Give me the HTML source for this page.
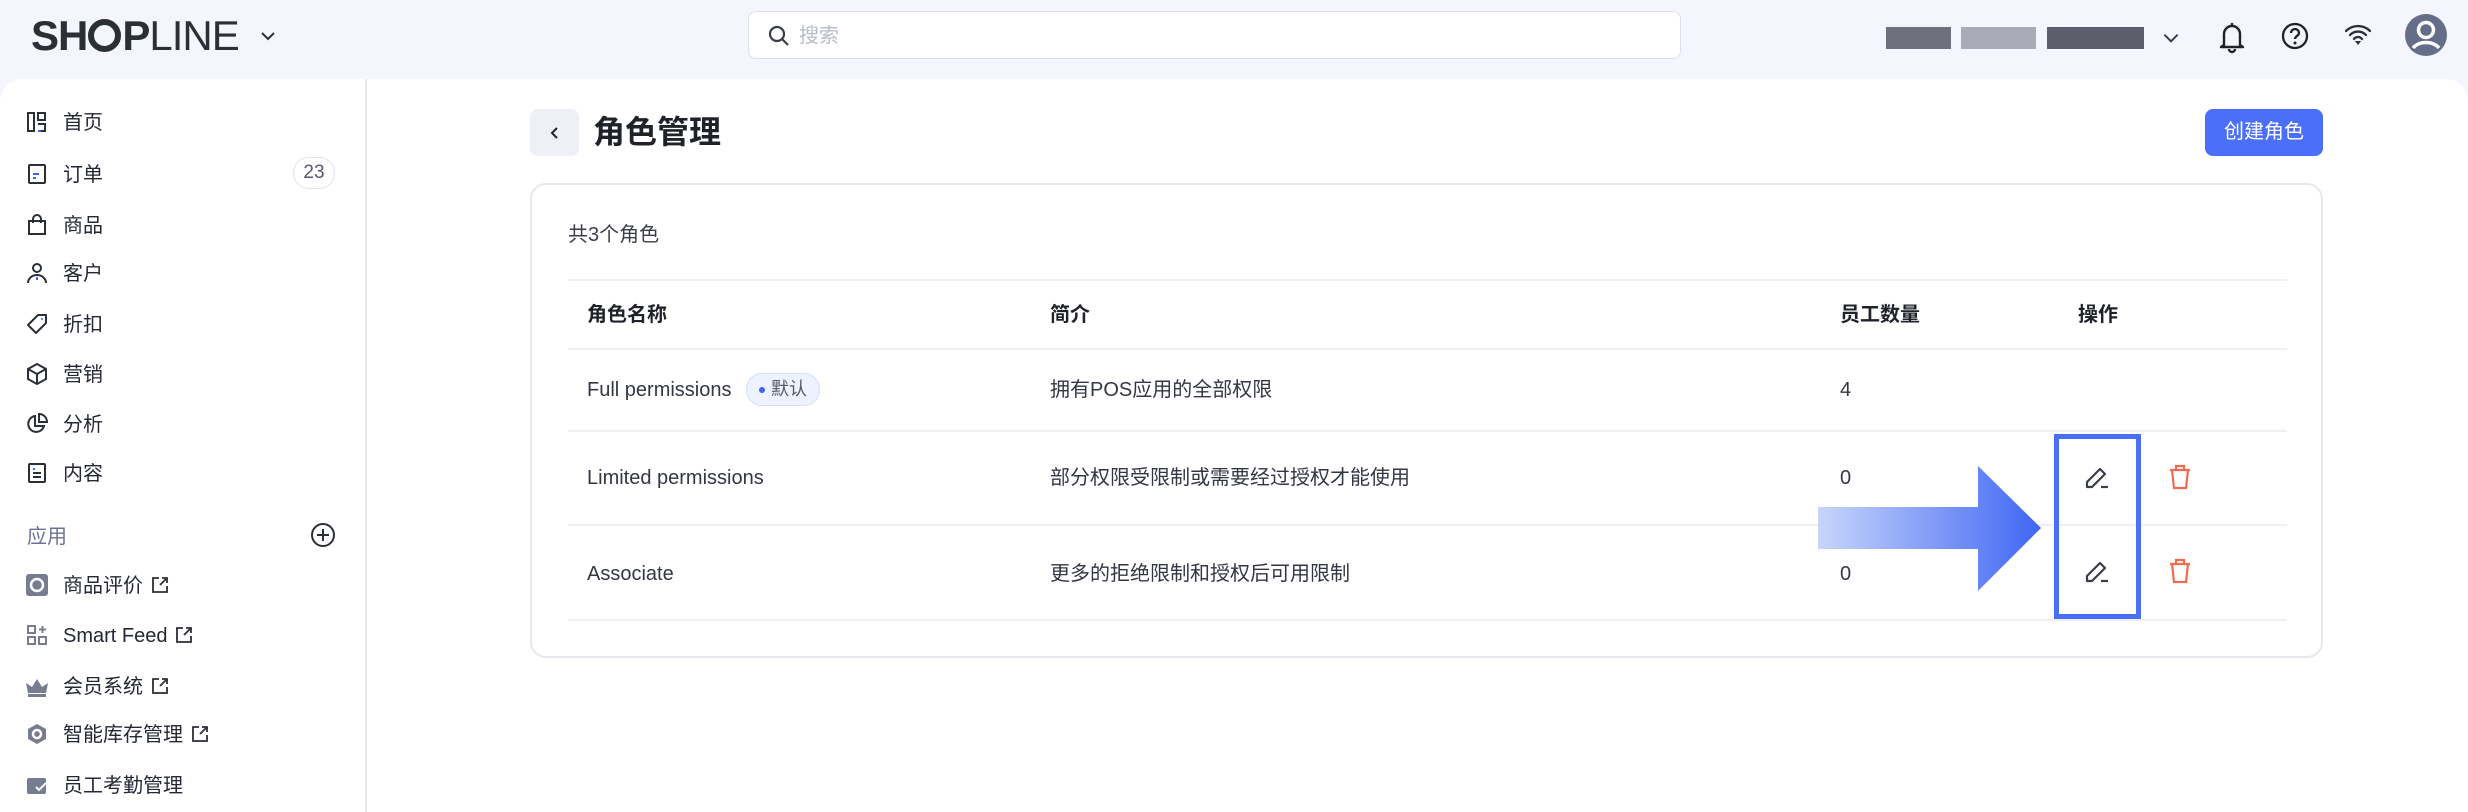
<!DOCTYPE html>
<html><head><meta charset="utf-8">
<style>
*{box-sizing:border-box;margin:0;padding:0}
body{width:2468px;height:812px;overflow:hidden;background:#f4f5fd;font-family:"Liberation Sans","Noto Sans CJK SC",sans-serif;color:#242833;position:relative}
.abs{position:absolute}
.logo{left:31px;top:12px;font-size:42px;font-weight:700;letter-spacing:-1px;color:#2b2f36;line-height:48px}
.logo .thin{font-weight:400}
.search{left:748px;top:11px;width:933px;height:48px;background:#fff;border:1px solid #dfe1ea;border-radius:8px}
.search span{position:absolute;left:50px;top:11px;font-size:20px;color:#b8bcc8;line-height:26px}
.page{left:0;top:79px;width:2468px;height:733px;background:#fff;border-radius:22px 22px 0 0}
.side{left:0;top:79px;width:367px;height:733px;border-right:2px solid #e6e8f0}
.item{position:absolute;left:0;height:40px;width:360px;font-size:20px;color:#242833}
.item>svg{position:absolute;left:26px;top:10px}
.item>span{position:absolute;left:63px;top:9px;line-height:26px;white-space:nowrap}
.ext{display:inline-block;vertical-align:-2px;margin-left:8px}
.badge{left:293px;top:157px;width:42px;height:32px;border:1px solid #e2e4ec;border-radius:16px;font-size:19px;color:#555a66;text-align:center;line-height:30px}
.back{left:530px;top:109px;width:49px;height:47px;background:#eef0f6;border-radius:8px}
.title{left:593px;top:112px;font-size:32px;font-weight:700;color:#1f2329;line-height:40px}
.btn{left:2205px;top:109px;width:118px;height:47px;background:#4a6ff8;border-radius:8px;color:#fff;font-size:20px;text-align:center;line-height:47px}
.card{left:530px;top:183px;width:1793px;height:475px;border:2px solid #e6e8ee;border-radius:16px}
.t{position:absolute;font-size:20px;color:#333742;white-space:nowrap;line-height:26px;height:26px}
.line{position:absolute;left:568px;width:1719px;height:2px;background:#eef0f3}
.tag{left:746px;top:373px;width:74px;height:33px;background:#eef1fe;border:1px solid #d8dffc;border-radius:16px;font-size:18px;color:#555a66;line-height:31px;padding-left:24px}
.tag:before{content:"";position:absolute;left:12px;top:13px;width:6px;height:6px;border-radius:3px;background:#3d63f3}
.hl{left:2054px;top:434px;width:87px;height:185px;border:5px solid #4a6ff8}
</style></head><body>
<div class="abs logo">SH<span style="display:inline-block;width:33px;height:33px;border:6px solid #2b2f36;border-radius:50%;vertical-align:-2px;margin:0 1px"></span>P<span class="thin">LINE</span></div>
<svg class="abs" style="left:258px;top:26px" width="20" height="20" viewBox="0 0 20 20"><path d="M4 7l6 6 6-6" fill="none" stroke="#2b2f36" stroke-width="2"/></svg>
<div class="abs search"><svg style="position:absolute;left:18px;top:12px" width="24" height="24" viewBox="0 0 24 24"><circle cx="10" cy="10" r="7" fill="none" stroke="#3a3e48" stroke-width="2.2"/><path d="M15 15l6 6" stroke="#3a3e48" stroke-width="2.2"/></svg><span>搜索</span></div>
<div class="abs" style="left:1886px;top:27px;width:65px;height:22px;background:#6e717c"></div>
<div class="abs" style="left:1961px;top:27px;width:75px;height:22px;background:#a9acb6"></div>
<div class="abs" style="left:2047px;top:27px;width:97px;height:22px;background:#5c5f6b"></div>
<svg class="abs" style="left:2160px;top:27px" width="22" height="22" viewBox="0 0 20 20"><path d="M4 7l6 6 6-6" fill="none" stroke="#3a3e48" stroke-width="1.8"/></svg>
<svg class="abs" style="left:2217px;top:20px" width="30" height="34" viewBox="0 0 30 34"><path d="M7 25V14a8 8 0 0116 0v11l3 2H4z" fill="none" stroke="#1f2329" stroke-width="2.4" stroke-linejoin="round"/><path d="M12 29a3 3 0 006 0" fill="none" stroke="#1f2329" stroke-width="2.4"/><path d="M15 3v3" stroke="#1f2329" stroke-width="2.4"/></svg>
<svg class="abs" style="left:2280px;top:21px" width="30" height="30" viewBox="0 0 30 30"><circle cx="15" cy="15" r="12" fill="none" stroke="#1f2329" stroke-width="2.3"/><path d="M11 12a4 4 0 118 0c0 3-4 3-4 6" fill="none" stroke="#1f2329" stroke-width="2.3"/><circle cx="15" cy="22" r="1.5" fill="#1f2329"/></svg>
<svg class="abs" style="left:2343px;top:23px" width="30" height="24" viewBox="0 0 28 24"><path d="M2 8a17 17 0 0124 0M6 12a11 11 0 0116 0M10 16a5 5 0 018 0" fill="none" stroke="#2b2f36" stroke-width="2.3" stroke-linecap="round"/><path d="M11 18h6l-3 4z" fill="#2b2f36"/></svg>
<svg class="abs" style="left:2404px;top:13px" width="44" height="44" viewBox="0 0 44 44"><circle cx="22" cy="22" r="21" fill="#646e88"/><circle cx="22" cy="17" r="7.5" fill="none" stroke="#fff" stroke-width="3.5"/><path d="M9 35a15 11 0 0126 0" fill="none" stroke="#fff" stroke-width="3.5"/></svg>

<div class="abs page"></div>
<div class="abs side"></div>
<div class="item" style="top:101px"><svg width="22" height="22" viewBox="0 0 22 22" fill="none" stroke="#2b2f36" stroke-width="2"><rect x="2" y="2" width="6" height="18"/><rect x="12" y="2" width="7" height="7"/><path d="M12 13h7v7h-4"/><path d="M15 20h-3" stroke="#3d63f3"/></svg><span>首页</span></div>
<div class="item" style="top:153px"><svg width="22" height="22" viewBox="0 0 22 22" fill="none" stroke="#2b2f36" stroke-width="2"><rect x="3" y="2" width="16" height="18" rx="1"/><path d="M7 11h6M7 15h3" stroke="#3d63f3"/></svg><span>订单</span></div>
<div class="abs badge">23</div>
<div class="item" style="top:204px"><svg width="22" height="22" viewBox="0 0 22 22" fill="none" stroke="#2b2f36" stroke-width="2"><path d="M3 7h16v13H3z"/><path d="M7 9V5a4 4 0 018 0v4"/></svg><span>商品</span></div>
<div class="item" style="top:252px"><svg width="22" height="22" viewBox="0 0 22 22" fill="none" stroke="#2b2f36" stroke-width="2"><circle cx="11" cy="6" r="4"/><path d="M2 21a9 8 0 0118 0"/><path d="M11 15v3" stroke="#3d63f3"/></svg><span>客户</span></div>
<div class="item" style="top:303px"><svg width="22" height="22" viewBox="0 0 22 22" fill="none" stroke="#2b2f36" stroke-width="2"><path d="M12 2h8v8L10 20 2 12z" stroke-linejoin="round"/><circle cx="16" cy="6" r="1" fill="#3d63f3" stroke="none"/></svg><span>折扣</span></div>
<div class="item" style="top:353px"><svg width="22" height="22" viewBox="0 0 22 22" fill="none" stroke="#2b2f36" stroke-width="2"><path d="M11 1l9 5v10l-9 5-9-5V6z"/><path d="M2 6l9 5 9-5M11 11v10"/></svg><span>营销</span></div>
<div class="item" style="top:403px"><svg width="22" height="22" viewBox="0 0 22 22" fill="none" stroke="#2b2f36" stroke-width="2"><path d="M9 3a8 8 0 109 10H9z"/><path d="M13 1a8 8 0 018 8h-8z"/></svg><span>分析</span></div>
<div class="item" style="top:452px"><svg width="22" height="22" viewBox="0 0 22 22" fill="none" stroke="#2b2f36" stroke-width="2"><rect x="3" y="2" width="16" height="18" rx="1"/><path d="M7 11h8M7 15h8"/><path d="M7 7h2" stroke="#3d63f3"/></svg><span>内容</span></div>
<div class="abs" style="left:27px;top:524px;font-size:20px;color:#6b7394;line-height:26px">应用</div>
<svg class="abs" style="left:310px;top:522px" width="26" height="26" viewBox="0 0 26 26" fill="none" stroke="#2b2f36" stroke-width="2"><circle cx="13" cy="13" r="11"/><path d="M13 7v12M7 13h12"/></svg>
<div class="item" style="top:564px"><svg width="22" height="22" viewBox="0 0 22 22"><rect x="0" y="0" width="22" height="22" rx="3" fill="#777c90"/><circle cx="11" cy="11" r="6" fill="none" stroke="#fff" stroke-width="2.5"/></svg><span>商品评价<svg class="ext" width="18" height="18" viewBox="0 0 18 18" fill="none" stroke="#2b2f36" stroke-width="1.8"><path d="M8 2H2v14h14v-6M11 2h5v5M16 2L9 9"/></svg></span></div>
<div class="item" style="top:614px"><svg width="22" height="22" viewBox="0 0 22 22" fill="none" stroke="#777c90" stroke-width="2"><rect x="2" y="2" width="7" height="7"/><rect x="2" y="13" width="7" height="7"/><rect x="13" y="13" width="7" height="7"/><path d="M16.5 2v7M13 5.5h7"/></svg><span>Smart Feed<svg class="ext" width="18" height="18" viewBox="0 0 18 18" fill="none" stroke="#2b2f36" stroke-width="1.8"><path d="M8 2H2v14h14v-6M11 2h5v5M16 2L9 9"/></svg></span></div>
<div class="item" style="top:665px"><svg width="22" height="22" viewBox="0 0 22 22" fill="#777c90"><path d="M0 8l6 4 5-8 5 8 6-4-2 10H2z"/><rect x="2" y="19" width="18" height="3"/></svg><span>会员系统<svg class="ext" width="18" height="18" viewBox="0 0 18 18" fill="none" stroke="#2b2f36" stroke-width="1.8"><path d="M8 2H2v14h14v-6M11 2h5v5M16 2L9 9"/></svg></span></div>
<div class="item" style="top:713px"><svg width="22" height="22" viewBox="0 0 22 22"><path d="M11 1l9 5v10l-9 5-9-5V6z" fill="#777c90"/><circle cx="11" cy="11" r="4" fill="none" stroke="#fff" stroke-width="2.5"/></svg><span>智能库存管理<svg class="ext" width="18" height="18" viewBox="0 0 18 18" fill="none" stroke="#2b2f36" stroke-width="1.8"><path d="M8 2H2v14h14v-6M11 2h5v5M16 2L9 9"/></svg></span></div>
<div class="item" style="top:764px"><svg width="22" height="22" viewBox="0 0 22 22"><rect x="1" y="4" width="19" height="16" rx="2" fill="#777c90"/><path d="M10 13l3 3 7-7" fill="none" stroke="#fff" stroke-width="2"/></svg><span>员工考勤管理</span></div>

<div class="abs back"><svg style="position:absolute;left:16px;top:15px" width="18" height="18" viewBox="0 0 18 18"><path d="M11 4L6 9l5 5" fill="none" stroke="#1f2329" stroke-width="2"/></svg></div>
<div class="abs title">角色管理</div>
<div class="abs btn">创建角色</div>
<div class="abs card"></div>
<div class="t" style="left:568px;top:222px;color:#3a3e48">共3个角色</div>
<div class="line" style="top:279px"></div>
<div class="line" style="top:348px"></div>
<div class="line" style="top:430px"></div>
<div class="line" style="top:524px"></div>
<div class="line" style="top:619px"></div>
<div class="t" style="left:587px;top:302px;font-weight:700;color:#1f2329">角色名称</div>
<div class="t" style="left:1050px;top:302px;font-weight:700;color:#1f2329">简介</div>
<div class="t" style="left:1840px;top:302px;font-weight:700;color:#1f2329">员工数量</div>
<div class="t" style="left:2078px;top:302px;font-weight:700;color:#1f2329">操作</div>
<div class="t" style="left:587px;top:377px">Full permissions</div>
<div class="abs tag">默认</div>
<div class="t" style="left:1050px;top:377px">拥有POS应用的全部权限</div>
<div class="t" style="left:1840px;top:377px">4</div>
<div class="t" style="left:587px;top:465px">Limited permissions</div>
<div class="t" style="left:1050px;top:465px">部分权限受限制或需要经过授权才能使用</div>
<div class="t" style="left:1840px;top:465px">0</div>
<div class="t" style="left:587px;top:561px">Associate</div>
<div class="t" style="left:1050px;top:561px">更多的拒绝限制和授权后可用限制</div>
<div class="t" style="left:1840px;top:561px">0</div>
<svg class="abs" style="left:2085px;top:465px" width="26" height="26" viewBox="0 0 26 26" fill="none" stroke="#3a3e48" stroke-width="2.2" stroke-linejoin="round"><path d="M2 22v-5L15 4l5 5L7 22z"/><path d="M16 22h7"/></svg>
<svg class="abs" style="left:2085px;top:559px" width="26" height="26" viewBox="0 0 26 26" fill="none" stroke="#3a3e48" stroke-width="2.2" stroke-linejoin="round"><path d="M2 22v-5L15 4l5 5L7 22z"/><path d="M16 22h7"/></svg>
<svg class="abs" style="left:2168px;top:464px" width="24" height="26" viewBox="0 0 24 26" fill="none" stroke="#ee6b4d" stroke-width="2.2"><path d="M2 6h20M4 6l2 18h12l2-18M8 6V2h8v4"/></svg>
<svg class="abs" style="left:2168px;top:558px" width="24" height="26" viewBox="0 0 24 26" fill="none" stroke="#ee6b4d" stroke-width="2.2"><path d="M2 6h20M4 6l2 18h12l2-18M8 6V2h8v4"/></svg>
<div class="abs hl"></div>
<svg class="abs" style="left:1818px;top:464px" width="226" height="128" viewBox="0 0 226 128"><defs><linearGradient id="g" x1="0" x2="1"><stop offset="0" stop-color="#c8d5fb"/><stop offset="1" stop-color="#3f66f5"/></linearGradient></defs><path d="M0 43h160V2l63 62-63 63V85H0z" fill="url(#g)"/></svg>
</body></html>
